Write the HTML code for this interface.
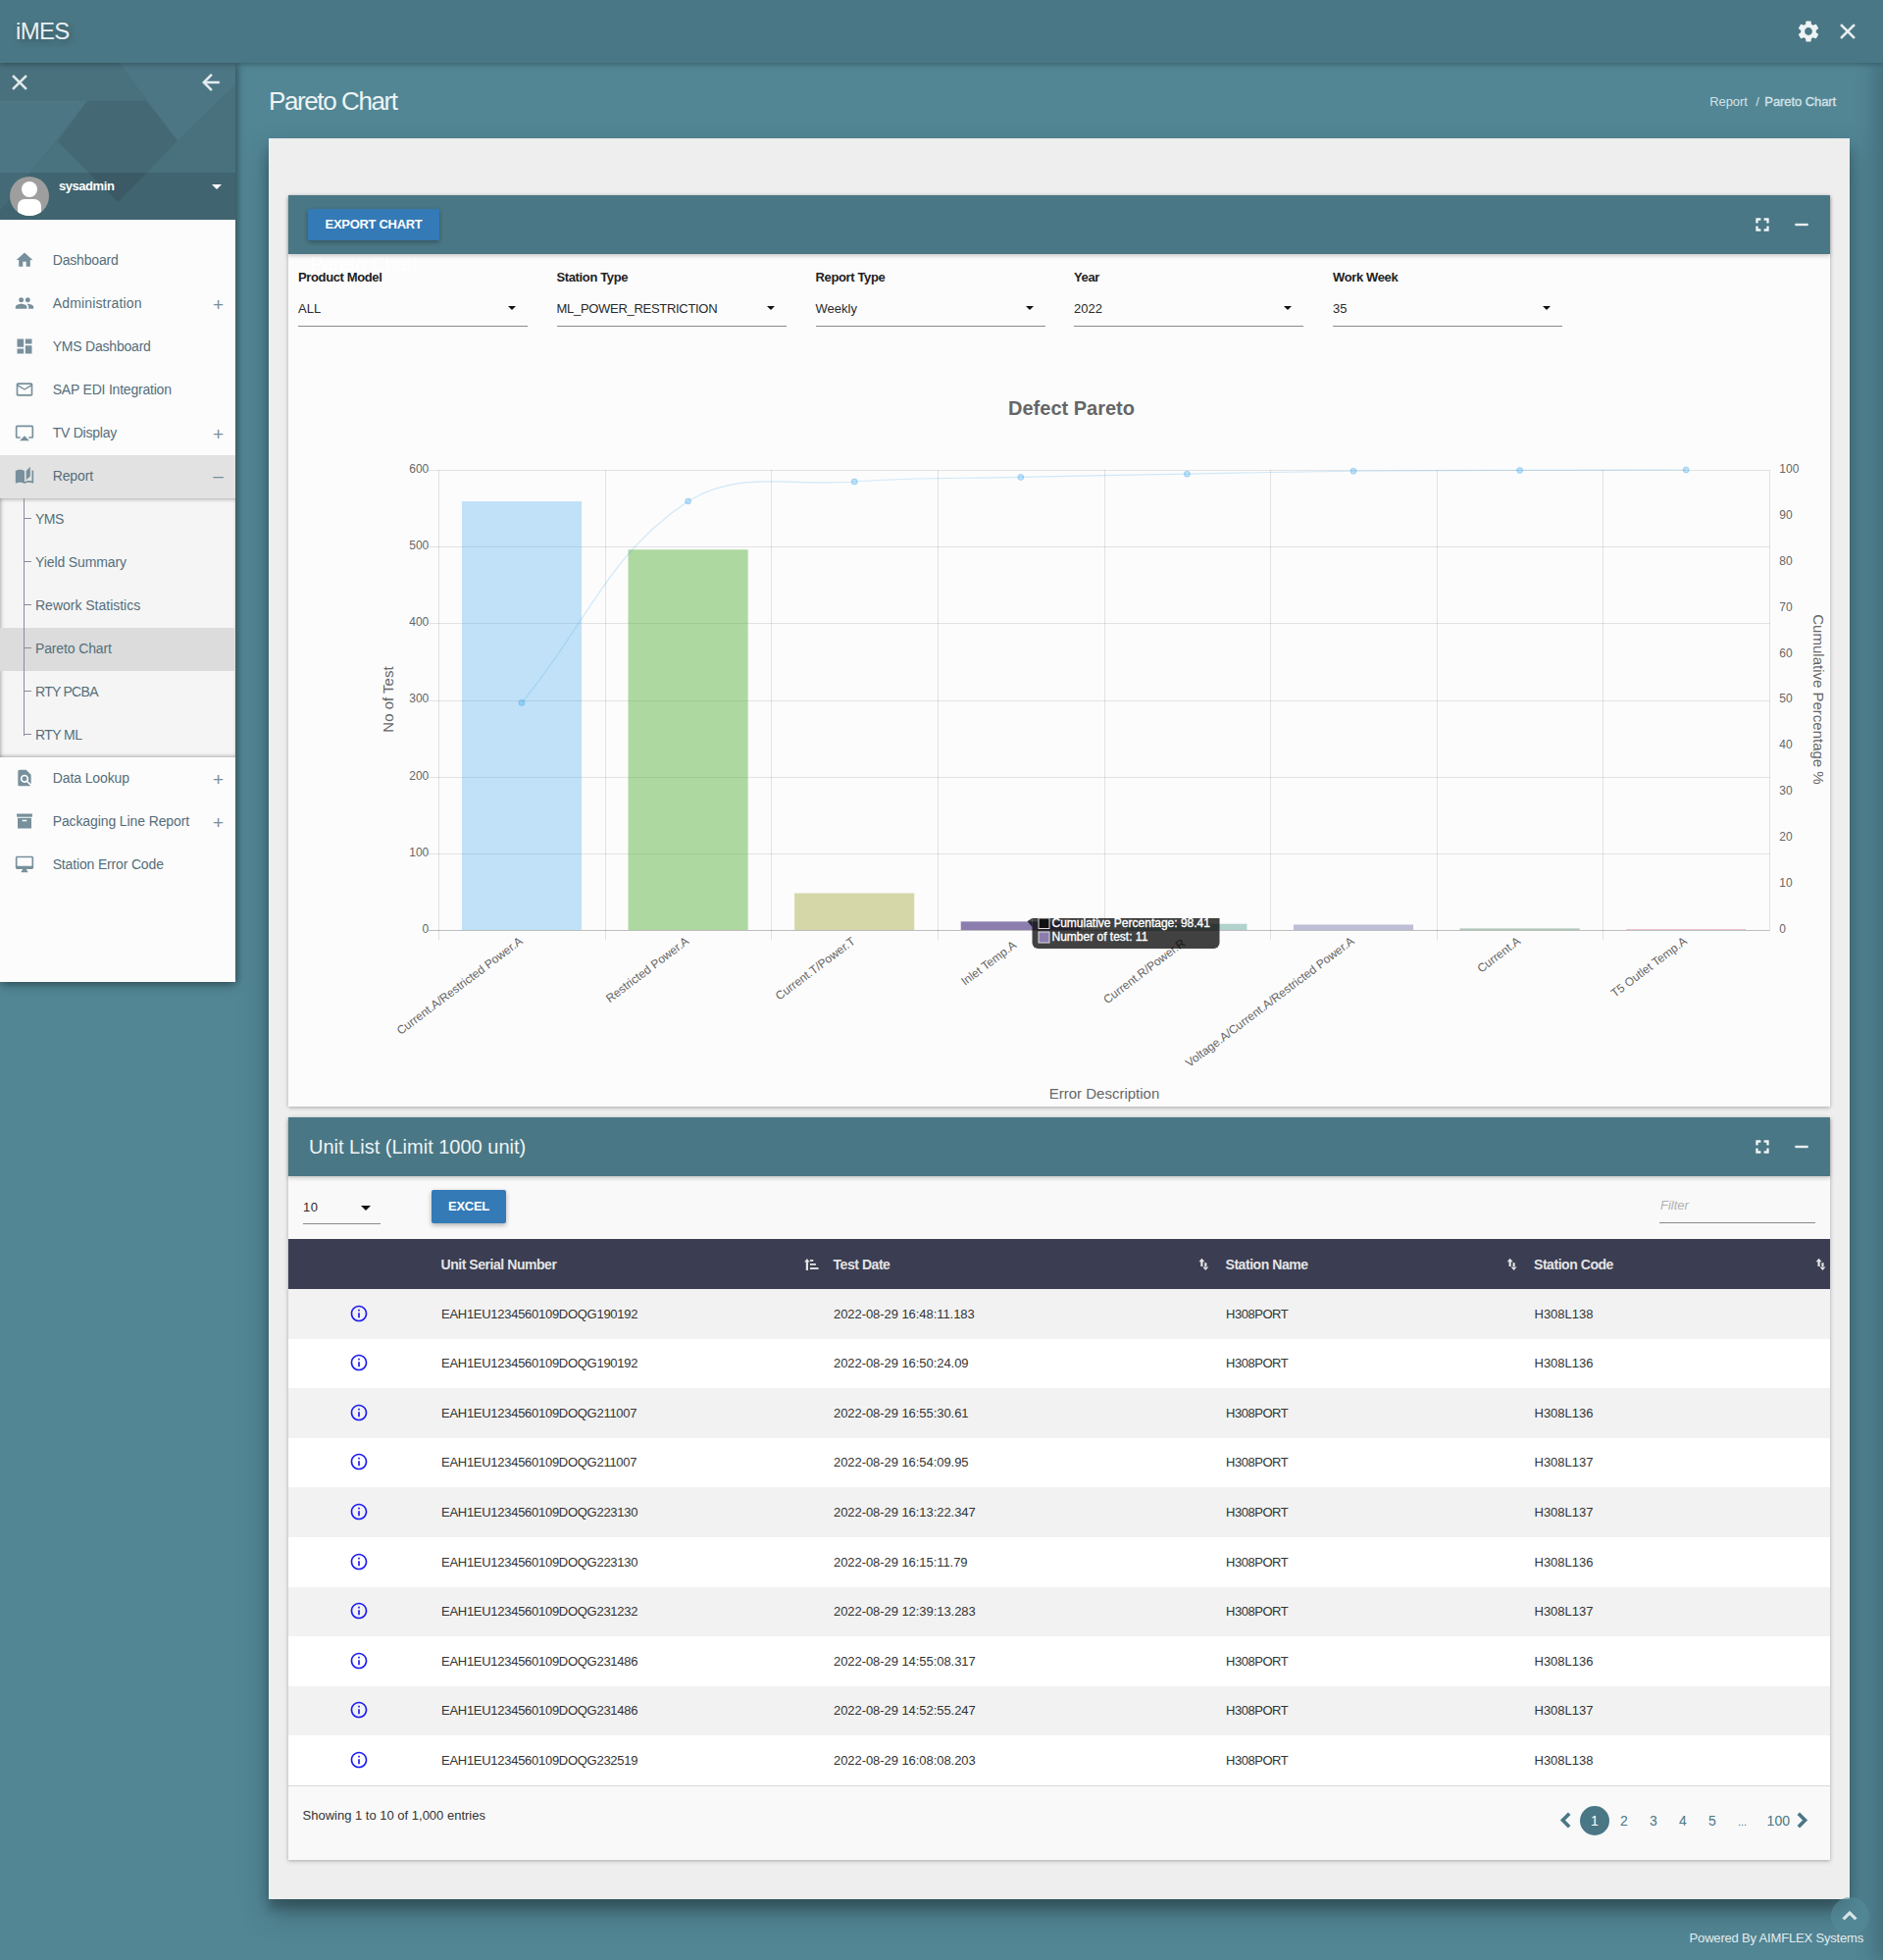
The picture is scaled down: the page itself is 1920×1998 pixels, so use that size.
<!DOCTYPE html>
<html lang="en">
<head>
<meta charset="utf-8">
<title>iMES - Pareto Chart</title>
<style>
*{box-sizing:border-box;margin:0;padding:0}
html,body{width:1920px;height:1998px;overflow:hidden}
body{font-family:"Liberation Sans",sans-serif;font-size:14px;color:#333;position:relative;
  background:#528695;}
.abs{position:absolute}
svg{display:block}
/* top bar */
#topbar{position:absolute;left:0;top:0;width:1920px;height:64px;background:#4a7785;box-shadow:0 2px 5px rgba(0,0,0,.26);z-index:20}
#brand{position:absolute;left:16px;top:17px;font-size:24px;line-height:30px;color:#e9eff1;text-shadow:2px 3px 7px rgba(0,0,0,.32);letter-spacing:-.7px}
/* sidebar */
#sidebar{position:absolute;left:0;top:64px;width:240px;height:937px;background:#fcfcfc;box-shadow:0 3px 10px rgba(0,0,0,.35),2px 0 6px rgba(0,0,0,.2);z-index:10}
#sbhead{position:absolute;left:0;top:0;width:240px;height:160px;background:#48707d;overflow:hidden}
#userrow{position:absolute;left:0;top:112px;width:240px;height:48px;background:rgba(0,0,0,.1)}
#uname{position:absolute;left:60px;top:6px;font-size:13px;font-weight:bold;color:#fff;line-height:16px;letter-spacing:-.45px}
.mi{position:absolute;left:0;width:240px;height:44px;color:#546e7a;font-size:14px;line-height:44px}
.mi .ic{position:absolute;left:15px;top:12px;width:20px;height:20px;fill:#78909c}
.mi .tx{position:absolute;left:53.7px;top:0;white-space:nowrap}
.mi .pl{position:absolute;left:215.5px;top:1.5px;width:14px;text-align:center;font-size:19px;color:#78909c}
.sub{position:absolute;left:0;width:240px;height:44px;color:#546e7a;font-size:14px;line-height:44px}
.sub .tx{position:absolute;left:36px;top:0;white-space:nowrap}
.sub .tk{position:absolute;left:25px;top:21px;width:7px;height:1px;background:#8a8aa0}
/* page */
#ptitle{position:absolute;left:274px;top:85px;font-size:26px;line-height:36px;color:#eef4f5;letter-spacing:-1.4px;white-space:nowrap}
#crumb span{position:absolute;top:94px;font-size:13px;line-height:20px;color:#d5e2e6;white-space:nowrap}
#content{position:absolute;left:274px;top:141px;width:1612px;height:1795px;background:#eeeeee;box-shadow:0 14px 28px rgba(0,0,0,.25),0 10px 10px rgba(0,0,0,.22)}
.card{position:absolute;left:20px;width:1572px;background:#fcfcfc;box-shadow:0 1px 4px rgba(0,0,0,.3)}
.chead{position:absolute;left:0;top:0;width:1572px;height:60px;background:#4a7785;box-shadow:0 2px 4px rgba(0,0,0,.2)}
.btn{position:absolute;background:#337ab7;color:#fff;font-weight:bold;font-size:13px;letter-spacing:-.3px;text-align:center;border-radius:2px;box-shadow:0 2px 5px rgba(0,0,0,.3);white-space:nowrap}

.flab{position:absolute;top:75.7px;font-size:13px;font-weight:bold;color:#222;line-height:16px;white-space:nowrap;letter-spacing:-.37px}
.fsel{position:absolute;top:99px;width:234px;height:35px;border-bottom:1px solid #8a8a8a}
.fsel span{position:absolute;left:0;top:9px;font-size:13px;line-height:16px;color:#2a2a2a;white-space:nowrap}
.fsel i{position:absolute;right:11.7px;top:14.3px;width:0;height:0;border-left:4.5px solid transparent;border-right:4.5px solid transparent;border-top:4.5px solid #111}
.hic{position:absolute;top:18.5px;width:22px;height:22px;fill:#f4f7f8;stroke:#f4f7f8;stroke-width:.5}
#c2title{position:absolute;left:21px;top:16px;font-size:20px;line-height:28px;color:#eef3f5;white-space:nowrap}
/*tablecss*/
.th{position:absolute;top:140px;font-size:14px;font-weight:bold;line-height:20px;color:#e4e4e4;white-space:nowrap;letter-spacing:-.45px}
.tr{position:absolute;left:0;width:1572px;height:50.6px}
.tr span{position:absolute;top:17.7px;font-size:13px;line-height:16px;color:#333;white-space:nowrap}
.pg{position:absolute;top:706.5px;width:40px;text-align:center;font-size:14px;line-height:20px}
/*/tablecss*/
</style>
</head>
<body>
<!-- TOPBAR -->
<div id="topbar">
  <div id="brand">iMES</div>
  <svg class="abs" style="left:1831px;top:19px" width="26" height="26" viewBox="0 0 24 24" fill="#eef3f5"><path d="M19.14 12.94c.04-.3.06-.61.06-.94 0-.32-.02-.64-.07-.94l2.03-1.58c.18-.14.23-.41.12-.61l-1.92-3.32c-.12-.22-.37-.29-.59-.22l-2.39.96c-.5-.38-1.03-.7-1.62-.94l-.36-2.54c-.04-.24-.24-.41-.48-.41h-3.84c-.24 0-.43.17-.47.41l-.36 2.54c-.59.24-1.13.57-1.62.94l-2.39-.96c-.22-.08-.47 0-.59.22L2.74 8.87c-.12.21-.08.47.12.61l2.03 1.58c-.05.3-.09.63-.09.94s.02.64.07.94l-2.03 1.58c-.18.14-.23.41-.12.61l1.92 3.32c.12.22.37.29.59.22l2.39-.96c.5.38 1.03.7 1.62.94l.36 2.54c.05.24.24.41.48.41h3.84c.24 0 .44-.17.47-.41l.36-2.54c.59-.24 1.13-.56 1.62-.94l2.39.96c.22.08.47 0 .59-.22l1.92-3.32c.12-.22.07-.47-.12-.61l-2.01-1.58zM12 15.6c-1.98 0-3.6-1.62-3.6-3.6s1.62-3.6 3.6-3.6 3.6 1.62 3.6 3.6-1.62 3.6-3.6 3.6z"/></svg>
  <svg class="abs" style="left:1871px;top:19px" width="26" height="26" viewBox="0 0 24 24" fill="#eef3f5" stroke="#eef3f5" stroke-width=".4"><path d="M19 6.41L17.59 5 12 10.59 6.41 5 5 6.41 10.59 12 5 17.59 6.41 19 12 13.41 17.59 19 19 17.59 13.41 12z"/></svg>
</div>

<!-- SIDEBAR -->
<div id="sidebar">
  <div id="sbhead">
    <svg class="abs" style="left:0;top:0" width="240" height="160" viewBox="0 0 240 160">
      <polygon points="121.5,0 240,0 240,22 181,79" fill="#4d7685"/>
      <polygon points="0,38.8 89,38.8 0,151" fill="#4d7685"/>
      <polygon points="89,38.8 149,38.8 181,79.2 150,112 90,112 58.7,80.6" fill="#446975"/>
      <polygon points="58.7,80.6 90,112 31.8,112" fill="#4a7380"/>
      <polygon points="90,112 150,112 120,142" fill="#426571"/>
    </svg>
    <svg class="abs" style="left:7px;top:7px" width="26" height="26" viewBox="0 0 24 24" fill="#e6eef0" stroke="#e6eef0" stroke-width=".4"><path d="M19 6.41L17.59 5 12 10.59 6.41 5 5 6.41 10.59 12 5 17.59 6.41 19 12 13.41 17.59 19 19 17.59 13.41 12z"/></svg>
    <svg class="abs" style="left:202px;top:7px" width="26" height="26" viewBox="0 0 24 24" fill="#e6eef0" stroke="#e6eef0" stroke-width=".4"><path d="M20 11H7.83l5.59-5.59L12 4l-8 8 8 8 1.41-1.41L7.83 13H20v-2z"/></svg>
    <div id="userrow">
      <div class="abs" style="left:10px;top:4px;width:40px;height:40px;border-radius:50%;background:#9e9e9e;overflow:hidden"><div class="abs" style="left:12px;top:5px;width:16px;height:16px;border-radius:50%;background:#fff"></div><div class="abs" style="left:8px;top:23px;width:24px;height:24px;border-radius:7px;background:#fff"></div></div>
      <div id="uname">sysadmin</div>
      <svg class="abs" style="left:209px;top:2px" width="24" height="24" viewBox="0 0 24 24" fill="#fff"><path d="M7 10l5 5 5-5z"/></svg>
    </div>
  </div>
  <div id="menu">
<div class="abs" style="left:0;top:443.5px;width:240px;height:264px;background:#f5f5f5;box-shadow:inset 0 3px 4px -2px rgba(0,0,0,.28),inset 0 -3px 4px -2px rgba(0,0,0,.28),inset 3px 0 4px -2px rgba(0,0,0,.2)"></div>
<div class="mi" style="top:179px"><svg class="ic" viewBox="0 0 24 24"><path fill-rule="evenodd" d="M10 20v-6h4v6h5v-8h3L12 3 2 12h3v8z"/></svg><span class="tx" style="letter-spacing:-0.17px">Dashboard</span></div>
<div class="mi" style="top:223px"><svg class="ic" viewBox="0 0 24 24"><path fill-rule="evenodd" d="M16 11c1.66 0 2.99-1.34 2.99-3S17.66 5 16 5c-1.66 0-3 1.34-3 3s1.34 3 3 3zm-8 0c1.66 0 2.99-1.34 2.99-3S9.66 5 8 5C6.34 5 5 6.34 5 8s1.34 3 3 3zm0 2c-2.33 0-7 1.17-7 3.5V19h14v-2.5c0-2.33-4.67-3.5-7-3.5zm8 0c-.29 0-.62.02-.97.05 1.16.84 1.97 1.97 1.97 3.45V19h6v-2.5c0-2.33-4.67-3.5-7-3.5z"/></svg><span class="tx" style="letter-spacing:0.16px">Administration</span><span class="pl">+</span></div>
<div class="mi" style="top:267px"><svg class="ic" viewBox="0 0 24 24"><path fill-rule="evenodd" d="M3 13h8V3H3v10zm0 8h8v-6H3v6zm10 0h8V11h-8v10zm0-18v6h8V3h-8z"/></svg><span class="tx" style="letter-spacing:-0.21px">YMS Dashboard</span></div>
<div class="mi" style="top:311px"><svg class="ic" viewBox="0 0 24 24"><path fill-rule="evenodd" d="M20 4H4c-1.1 0-1.99.9-1.99 2L2 18c0 1.1.9 2 2 2h16c1.1 0 2-.9 2-2V6c0-1.1-.9-2-2-2zm0 14H4V8l8 5 8-5v10zm-8-7L4 6h16l-8 5z"/></svg><span class="tx" style="letter-spacing:-0.21px">SAP EDI Integration</span></div>
<div class="mi" style="top:355px"><svg class="ic" viewBox="0 0 24 24"><path fill-rule="evenodd" d="M6 22h12l-6-6zM21 3H3c-1.1 0-2 .9-2 2v12c0 1.1.9 2 2 2h4v-2H3V5h18v12h-4v2h4c1.1 0 2-.9 2-2V5c0-1.1-.9-2-2-2z"/></svg><span class="tx" style="letter-spacing:-0.24px">TV Display</span><span class="pl">+</span></div>
<div class="abs" style="left:0;top:400.2px;width:240px;height:44px;background:#e2e2e2"></div>
<div class="mi" style="top:399px"><svg class="ic" viewBox="0 0 24 24"><path fill-rule="evenodd" d="M19 1l-5 5v11l5-4.5V1zM1 6v14.65c0 .25.25.5.5.5.1 0 .15-.05.25-.05C3.1 20.45 5.05 20 6.5 20c1.95 0 4.05.4 5.5 1.5V6c-1.45-1.1-3.55-1.5-5.5-1.5S2.45 4.9 1 6zm22 13.5V6c-.6-.45-1.25-.75-2-1v13.5c-1.1-.35-2.3-.5-3.5-.5-1.7 0-4.15.65-5.5 1.5v2c1.35-.85 3.8-1.5 5.5-1.5 1.65 0 3.35.3 4.75 1.05.1.05.15.05.25.05.25 0 .5-.25.5-.5v-1.1z"/></svg><span class="tx" style="letter-spacing:-0.12px">Report</span><span class="pl" style="top:0">–</span></div>
<div class="sub" style="top:443px"><span class="tk"></span><span class="tx" style="letter-spacing:-0.5px">YMS</span></div>
<div class="sub" style="top:487px"><span class="tk"></span><span class="tx" style="letter-spacing:-0.11px">Yield Summary</span></div>
<div class="sub" style="top:531px"><span class="tk"></span><span class="tx" style="letter-spacing:-0.01px">Rework Statistics</span></div>
<div class="abs" style="left:0;top:575.8px;width:240px;height:44px;background:#dcdcdc"></div>
<div class="sub" style="top:575px"><span class="tk"></span><span class="tx" style="letter-spacing:-0.14px">Pareto Chart</span></div>
<div class="sub" style="top:619px"><span class="tk"></span><span class="tx" style="letter-spacing:-0.72px">RTY PCBA</span></div>
<div class="sub" style="top:663px"><span class="tk"></span><span class="tx" style="letter-spacing:-0.57px">RTY ML</span></div>
<div class="mi" style="top:707px"><svg class="ic" viewBox="0 0 24 24"><path fill-rule="evenodd" d="M20 19.59V8l-6-6H6c-1.1 0-1.99.9-1.99 2L4 20c0 1.1.89 2 1.99 2H18c.45 0 .85-.15 1.19-.4l-4.43-4.43c-.8.52-1.74.83-2.76.83-2.76 0-5-2.24-5-5s2.24-5 5-5 5 2.24 5 5c0 1.02-.31 1.96-.83 2.75L20 19.59zM9 13c0 1.66 1.34 3 3 3s3-1.34 3-3-1.34-3-3-3-3 1.34-3 3z"/></svg><span class="tx" style="letter-spacing:-0.1px">Data Lookup</span><span class="pl">+</span></div>
<div class="mi" style="top:751px"><svg class="ic" viewBox="0 0 24 24"><path fill-rule="evenodd" d="M2.5 3h19v4h-19zM3.6 8.2h16.8V21H3.6zM9.2 10.4h5.6v2H9.2z"/></svg><span class="tx" style="letter-spacing:-0.11px">Packaging Line Report</span><span class="pl">+</span></div>
<div class="mi" style="top:795px"><svg class="ic" viewBox="0 0 24 24"><path fill-rule="evenodd" d="M21 2H3c-1.1 0-2 .9-2 2v12c0 1.1.9 2 2 2h7l-2 3v1h8v-1l-2-3h7c1.1 0 2-.9 2-2V4c0-1.1-.9-2-2-2zm0 12H3V4h18v10z"/></svg><span class="tx" style="letter-spacing:-0.16px">Station Error Code</span></div>
<div class="abs" style="left:24px;top:443.5px;width:1px;height:242px;background:#8a8aa0"></div>
</div><!--/menu-->
</div>

<div id="rshadow" class="abs" style="left:1920px;top:64px;width:20px;height:1934px;box-shadow:-4px 0 22px 4px rgba(0,0,0,.2)"></div>
<!-- PAGE -->
<div id="ptitle">Pareto Chart</div>
<div id="crumb"><span style="left:1743.3px;letter-spacing:-.1px">Report</span><span style="left:1790.3px">/</span><span style="left:1799.3px;letter-spacing:-.07px;-webkit-text-stroke:.35px #d5e2e6">Pareto Chart</span></div>
<div id="content">
  <div class="card" id="card1" style="top:58px;height:929px">
<!--chart-->
<svg class="abs" style="left:0;top:0" width="1572" height="929" viewBox="294 199 1572 929" font-family="Liberation Sans, sans-serif">
<line x1="447.50" y1="479.0" x2="447.50" y2="958.5" stroke="rgba(0,0,0,.1)" stroke-width="1"/>
<line x1="617.50" y1="479.0" x2="617.50" y2="958.5" stroke="rgba(0,0,0,.1)" stroke-width="1"/>
<line x1="786.50" y1="479.0" x2="786.50" y2="958.5" stroke="rgba(0,0,0,.1)" stroke-width="1"/>
<line x1="956.50" y1="479.0" x2="956.50" y2="958.5" stroke="rgba(0,0,0,.1)" stroke-width="1"/>
<line x1="1126.50" y1="479.0" x2="1126.50" y2="958.5" stroke="rgba(0,0,0,.1)" stroke-width="1"/>
<line x1="1295.50" y1="479.0" x2="1295.50" y2="958.5" stroke="rgba(0,0,0,.1)" stroke-width="1"/>
<line x1="1465.50" y1="479.0" x2="1465.50" y2="958.5" stroke="rgba(0,0,0,.1)" stroke-width="1"/>
<line x1="1634.50" y1="479.0" x2="1634.50" y2="958.5" stroke="rgba(0,0,0,.1)" stroke-width="1"/>
<line x1="1804.50" y1="479.0" x2="1804.50" y2="948.5" stroke="rgba(0,0,0,.1)" stroke-width="1"/>
<line x1="437.2" y1="948.50" x2="1804.5" y2="948.50" stroke="rgba(0,0,0,.25)" stroke-width="1"/>
<text x="437.3" y="947.80" font-size="12" fill="#666" text-anchor="end" dominant-baseline="middle">0</text>
<line x1="437.2" y1="870.50" x2="1804.5" y2="870.50" stroke="rgba(0,0,0,.1)" stroke-width="1"/>
<text x="437.3" y="869.63" font-size="12" fill="#666" text-anchor="end" dominant-baseline="middle">100</text>
<line x1="437.2" y1="792.50" x2="1804.5" y2="792.50" stroke="rgba(0,0,0,.1)" stroke-width="1"/>
<text x="437.3" y="791.47" font-size="12" fill="#666" text-anchor="end" dominant-baseline="middle">200</text>
<line x1="437.2" y1="714.50" x2="1804.5" y2="714.50" stroke="rgba(0,0,0,.1)" stroke-width="1"/>
<text x="437.3" y="713.30" font-size="12" fill="#666" text-anchor="end" dominant-baseline="middle">300</text>
<line x1="437.2" y1="635.50" x2="1804.5" y2="635.50" stroke="rgba(0,0,0,.1)" stroke-width="1"/>
<text x="437.3" y="635.13" font-size="12" fill="#666" text-anchor="end" dominant-baseline="middle">400</text>
<line x1="437.2" y1="557.50" x2="1804.5" y2="557.50" stroke="rgba(0,0,0,.1)" stroke-width="1"/>
<text x="437.3" y="556.97" font-size="12" fill="#666" text-anchor="end" dominant-baseline="middle">500</text>
<line x1="437.2" y1="479.50" x2="1804.5" y2="479.50" stroke="rgba(0,0,0,.1)" stroke-width="1"/>
<text x="437.3" y="478.80" font-size="12" fill="#666" text-anchor="end" dominant-baseline="middle">600</text>
<text x="1814.3" y="947.80" font-size="12" fill="#666" dominant-baseline="middle">0</text>
<text x="1814.3" y="900.90" font-size="12" fill="#666" dominant-baseline="middle">10</text>
<text x="1814.3" y="854.00" font-size="12" fill="#666" dominant-baseline="middle">20</text>
<text x="1814.3" y="807.10" font-size="12" fill="#666" dominant-baseline="middle">30</text>
<text x="1814.3" y="760.20" font-size="12" fill="#666" dominant-baseline="middle">40</text>
<text x="1814.3" y="713.30" font-size="12" fill="#666" dominant-baseline="middle">50</text>
<text x="1814.3" y="666.40" font-size="12" fill="#666" dominant-baseline="middle">60</text>
<text x="1814.3" y="619.50" font-size="12" fill="#666" dominant-baseline="middle">70</text>
<text x="1814.3" y="572.60" font-size="12" fill="#666" dominant-baseline="middle">80</text>
<text x="1814.3" y="525.70" font-size="12" fill="#666" dominant-baseline="middle">90</text>
<text x="1814.3" y="478.80" font-size="12" fill="#666" dominant-baseline="middle">100</text>
<rect x="470.94" y="511.05" width="122.11" height="436.95" fill="rgba(54,162,235,.3)"/>
<rect x="640.54" y="560.29" width="122.11" height="387.71" fill="rgba(94,180,68,.5)"/>
<rect x="810.14" y="910.48" width="122.11" height="37.52" fill="rgba(176,178,84,.5)"/>
<rect x="979.74" y="939.40" width="122.11" height="8.60" fill="rgba(92,71,142,.7)"/>
<rect x="1149.34" y="941.75" width="122.11" height="6.25" fill="rgba(67,147,134,.4)"/>
<rect x="1318.94" y="942.53" width="122.11" height="5.47" fill="rgba(97,97,160,.4)"/>
<rect x="1488.54" y="946.44" width="122.11" height="1.56" fill="rgba(98,148,118,.5)"/>
<rect x="1658.14" y="947.22" width="122.11" height="0.78" fill="rgba(212,108,158,.5)"/>
<path d="M532.00 716.40 C599.84 634.20 618.91 565.84 701.60 510.90 C754.59 479.00 803.14 495.92 871.20 491.02 C938.82 486.14 972.95 488.03 1040.80 486.46 C1108.63 484.88 1142.56 484.39 1210.40 483.14 C1278.24 481.90 1312.16 480.99 1380.00 480.24 C1447.84 479.50 1481.76 479.66 1549.60 479.41 C1617.44 479.17 1651.36 479.17 1719.20 479.00" fill="none" stroke="rgba(54,162,235,.22)" stroke-width="1.2"/>
<circle cx="532.00" cy="716.40" r="3" fill="rgba(54,162,235,.3)" stroke="rgba(54,162,235,.35)" stroke-width="1"/>
<circle cx="701.60" cy="510.90" r="3" fill="rgba(54,162,235,.3)" stroke="rgba(54,162,235,.35)" stroke-width="1"/>
<circle cx="871.20" cy="491.02" r="3" fill="rgba(54,162,235,.3)" stroke="rgba(54,162,235,.35)" stroke-width="1"/>
<circle cx="1040.80" cy="486.46" r="3" fill="rgba(54,162,235,.3)" stroke="rgba(54,162,235,.35)" stroke-width="1"/>
<circle cx="1210.40" cy="483.14" r="3" fill="rgba(54,162,235,.3)" stroke="rgba(54,162,235,.35)" stroke-width="1"/>
<circle cx="1380.00" cy="480.24" r="3" fill="rgba(54,162,235,.3)" stroke="rgba(54,162,235,.35)" stroke-width="1"/>
<circle cx="1549.60" cy="479.41" r="3" fill="rgba(54,162,235,.3)" stroke="rgba(54,162,235,.35)" stroke-width="1"/>
<circle cx="1719.20" cy="479.00" r="3" fill="rgba(54,162,235,.3)" stroke="rgba(54,162,235,.35)" stroke-width="1"/>
<text transform="translate(531.70 958.5) rotate(-37)" font-size="12" fill="#666" text-anchor="end" dominant-baseline="middle">Current.A/Restricted Power.A</text>
<text transform="translate(701.30 958.5) rotate(-37)" font-size="12" fill="#666" text-anchor="end" dominant-baseline="middle">Restricted Power.A</text>
<text transform="translate(870.90 958.5) rotate(-37)" font-size="12" fill="#666" text-anchor="end" dominant-baseline="middle">Current.T/Power.T</text>
<text transform="translate(1035.15 962.5) rotate(-37)" font-size="12" fill="#666" text-anchor="end" dominant-baseline="middle">Inlet Temp.A</text>
<text transform="translate(1207.46 960.5) rotate(-37)" font-size="12" fill="#666" text-anchor="end" dominant-baseline="middle">Current.R/Power.R</text>
<text transform="translate(1379.70 958.5) rotate(-37)" font-size="12" fill="#666" text-anchor="end" dominant-baseline="middle">Voltage.A/Current.A/Restricted Power.A</text>
<text transform="translate(1549.30 958.5) rotate(-37)" font-size="12" fill="#666" text-anchor="end" dominant-baseline="middle">Current.A</text>
<text transform="translate(1718.90 958.5) rotate(-37)" font-size="12" fill="#666" text-anchor="end" dominant-baseline="middle">T5 Outlet Temp.A</text>
<text transform="translate(397 713) rotate(-90)" font-size="15" fill="#666" text-anchor="middle" dominant-baseline="middle">No of Test</text>
<text transform="translate(1853 713) rotate(90)" font-size="15" fill="#666" text-anchor="middle" dominant-baseline="middle">Cumulative Percentage %</text>
<text x="1126" y="1115.7" font-size="15" fill="#666" text-anchor="middle" dominant-baseline="middle">Error Description</text>
<text x="1092.5" y="417.5" font-size="20" font-weight="bold" fill="#666" text-anchor="middle" dominant-baseline="middle">Defect Pareto</text>
<g>
<path d="M1052.5 936 H1243.5 V961 a6 6 0 0 1 -6 6 H1058.5 a6 6 0 0 1 -6 -6 Z" fill="rgba(0,0,0,.74)"/>
<path d="M1052.5 936 L1047.5 939 L1052.5 945 Z" fill="rgba(0,0,0,.74)"/>
<rect x="1059" y="936" width="11" height="10.5" fill="#111" stroke="#ddd" stroke-width="1"/>
<rect x="1059" y="950" width="11" height="11" fill="rgb(140,125,175)" stroke="#ddd" stroke-width="1"/>
<g font-size="12" fill="#fff" stroke="#fff" stroke-width=".35"><text x="1072.5" y="941.5" dominant-baseline="middle">Cumulative Percentage: 98.41</text><text x="1072.5" y="955.5" dominant-baseline="middle">Number of test: 11</text></g>
</g>
</svg>
<!--/chart-->
<div id="ghost" class="abs" style="left:22px;top:58px;font-size:20px;line-height:24px;color:#fff;letter-spacing:-.3px;white-space:nowrap">Pareto Chart</div>
<!--filters-->
<div class="flab" style="left:10px">Product Model</div><div class="fsel" style="left:10px"><span>ALL</span><i></i></div>
<div class="flab" style="left:273.5px">Station Type</div><div class="fsel" style="left:273.5px"><span style="letter-spacing:-.3px">ML_POWER_RESTRICTION</span><i></i></div>
<div class="flab" style="left:537.5px">Report Type</div><div class="fsel" style="left:537.5px"><span>Weekly</span><i></i></div>
<div class="flab" style="left:801px">Year</div><div class="fsel" style="left:801px"><span>2022</span><i></i></div>
<div class="flab" style="left:1065px">Work Week</div><div class="fsel" style="left:1065px"><span>35</span><i></i></div>
<!--/filters-->
    <div class="chead">
      <div class="btn" style="left:20px;top:13.8px;width:134px;height:32.3px;line-height:32.3px">EXPORT CHART</div>
      <svg class="hic" style="left:1491.5px" viewBox="0 0 24 24"><path d="M7 14H5v5h5v-2H7v-3zm-2-4h2V7h3V5H5v5zm12 7h-3v2h5v-5h-2v3zM14 5v2h3v3h2V5h-5z"/></svg><svg class="hic" style="left:1531.5px" viewBox="0 0 24 24"><path d="M19 13H5v-2h14v2z"/></svg>
    </div>
  </div>
  <div class="card" id="card2" style="top:998px;height:757px">
<!--table-->
<div class="abs" style="left:0;top:60px;width:1572px;height:64px;background:#f9f9f9"></div>
<div class="abs" style="left:15px;top:81.5px;width:79px;height:27px;border-bottom:1px solid #8a8a8a"><span class="abs" style="left:0;top:2px;font-size:13px;line-height:16px;color:#2a2a2a;letter-spacing:.6px">10</span><i class="abs" style="left:59px;top:8px;width:0;height:0;border-left:5px solid transparent;border-right:5px solid transparent;border-top:5px solid #111"></i></div>
<div class="btn" style="left:146px;top:74px;width:76px;height:34px;line-height:34px">EXCEL</div>
<div class="abs" style="left:1398px;top:81px;width:159px;height:27px;border-bottom:1px solid #8a8a8a"><span class="abs" style="left:1px;top:1px;font-size:13px;line-height:16px;color:#b0b0b0;font-style:italic">Filter</span></div>
<div class="abs" style="left:0;top:124px;width:1572px;height:51px;background:#3b3d52"></div>
<div class="th" style="left:155.5px">Unit Serial Number</div>
<div class="th" style="left:555.5px">Test Date</div>
<div class="th" style="left:955.5px">Station Name</div>
<div class="th" style="left:1270px">Station Code</div>
<svg class="abs" style="left:0;top:124px" width="1572" height="51" viewBox="0 124 1572 51" fill="#e4e4e4"><path d="M526.10 147.40 L528.90 144.00 L531.70 147.40 Z M527.80 146.90 H530.00 V155.90 H527.80 Z"/><rect x="531.9" y="145" width="3.4" height="1.8"/><rect x="531.9" y="149" width="6" height="1.8"/><rect x="531.9" y="153.1" width="8.7" height="1.9"/></svg>
<svg class="abs" style="left:0;top:124px" width="1572" height="51" viewBox="0 124 1572 51" fill="#e4e4e4"><path d="M928.40 147.30 L931.40 143.70 L934.40 147.30 Z M930.30 146.80 H932.50 V152.00 H930.30 Z"/><path d="M932.30 152.40 L935.30 156.00 L938.30 152.40 Z M934.20 148.20 H936.40 V152.90 H934.20 Z"/></svg>
<svg class="abs" style="left:0;top:124px" width="1572" height="51" viewBox="0 124 1572 51" fill="#e4e4e4"><path d="M1242.70 147.30 L1245.70 143.70 L1248.70 147.30 Z M1244.60 146.80 H1246.80 V152.00 H1244.60 Z"/><path d="M1246.60 152.40 L1249.60 156.00 L1252.60 152.40 Z M1248.50 148.20 H1250.70 V152.90 H1248.50 Z"/></svg>
<svg class="abs" style="left:0;top:124px" width="1572" height="51" viewBox="0 124 1572 51" fill="#e4e4e4"><path d="M1557.60 147.30 L1560.60 143.70 L1563.60 147.30 Z M1559.50 146.80 H1561.70 V152.00 H1559.50 Z"/><path d="M1561.50 152.40 L1564.50 156.00 L1567.50 152.40 Z M1563.40 148.20 H1565.60 V152.90 H1563.40 Z"/></svg>
<div class="tr" style="top:175px;background:#f2f2f2"><svg class="abs" style="left:62px;top:14.7px" width="20" height="20" viewBox="0 0 24 24" fill="#1c1cf0"><path d="M11 7h2v2h-2zm0 4h2v6h-2zm1-9C6.48 2 2 6.48 2 12s4.48 10 10 10 10-4.48 10-10S17.52 2 12 2zm0 18c-4.41 0-8-3.59-8-8s3.59-8 8-8 8 3.59 8 8-3.59 8-8 8z"/></svg><span style="left:156px;letter-spacing:-.28px">EAH1EU1234560109DOQG190192</span><span style="left:556px;letter-spacing:-.06px">2022-08-29 16:48:11.183</span><span style="left:956px;letter-spacing:-.47px">H308PORT</span><span style="left:1270.5px">H308L138</span></div>
<div class="tr" style="top:225.6px;background:#ffffff"><svg class="abs" style="left:62px;top:14.7px" width="20" height="20" viewBox="0 0 24 24" fill="#1c1cf0"><path d="M11 7h2v2h-2zm0 4h2v6h-2zm1-9C6.48 2 2 6.48 2 12s4.48 10 10 10 10-4.48 10-10S17.52 2 12 2zm0 18c-4.41 0-8-3.59-8-8s3.59-8 8-8 8 3.59 8 8-3.59 8-8 8z"/></svg><span style="left:156px;letter-spacing:-.28px">EAH1EU1234560109DOQG190192</span><span style="left:556px;letter-spacing:-.06px">2022-08-29 16:50:24.09</span><span style="left:956px;letter-spacing:-.47px">H308PORT</span><span style="left:1270.5px">H308L136</span></div>
<div class="tr" style="top:276.2px;background:#f2f2f2"><svg class="abs" style="left:62px;top:14.7px" width="20" height="20" viewBox="0 0 24 24" fill="#1c1cf0"><path d="M11 7h2v2h-2zm0 4h2v6h-2zm1-9C6.48 2 2 6.48 2 12s4.48 10 10 10 10-4.48 10-10S17.52 2 12 2zm0 18c-4.41 0-8-3.59-8-8s3.59-8 8-8 8 3.59 8 8-3.59 8-8 8z"/></svg><span style="left:156px;letter-spacing:-.28px">EAH1EU1234560109DOQG211007</span><span style="left:556px;letter-spacing:-.06px">2022-08-29 16:55:30.61</span><span style="left:956px;letter-spacing:-.47px">H308PORT</span><span style="left:1270.5px">H308L136</span></div>
<div class="tr" style="top:326.8px;background:#ffffff"><svg class="abs" style="left:62px;top:14.7px" width="20" height="20" viewBox="0 0 24 24" fill="#1c1cf0"><path d="M11 7h2v2h-2zm0 4h2v6h-2zm1-9C6.48 2 2 6.48 2 12s4.48 10 10 10 10-4.48 10-10S17.52 2 12 2zm0 18c-4.41 0-8-3.59-8-8s3.59-8 8-8 8 3.59 8 8-3.59 8-8 8z"/></svg><span style="left:156px;letter-spacing:-.28px">EAH1EU1234560109DOQG211007</span><span style="left:556px;letter-spacing:-.06px">2022-08-29 16:54:09.95</span><span style="left:956px;letter-spacing:-.47px">H308PORT</span><span style="left:1270.5px">H308L137</span></div>
<div class="tr" style="top:377.40000000000003px;background:#f2f2f2"><svg class="abs" style="left:62px;top:14.7px" width="20" height="20" viewBox="0 0 24 24" fill="#1c1cf0"><path d="M11 7h2v2h-2zm0 4h2v6h-2zm1-9C6.48 2 2 6.48 2 12s4.48 10 10 10 10-4.48 10-10S17.52 2 12 2zm0 18c-4.41 0-8-3.59-8-8s3.59-8 8-8 8 3.59 8 8-3.59 8-8 8z"/></svg><span style="left:156px;letter-spacing:-.28px">EAH1EU1234560109DOQG223130</span><span style="left:556px;letter-spacing:-.06px">2022-08-29 16:13:22.347</span><span style="left:956px;letter-spacing:-.47px">H308PORT</span><span style="left:1270.5px">H308L137</span></div>
<div class="tr" style="top:428.00000000000006px;background:#ffffff"><svg class="abs" style="left:62px;top:14.7px" width="20" height="20" viewBox="0 0 24 24" fill="#1c1cf0"><path d="M11 7h2v2h-2zm0 4h2v6h-2zm1-9C6.48 2 2 6.48 2 12s4.48 10 10 10 10-4.48 10-10S17.52 2 12 2zm0 18c-4.41 0-8-3.59-8-8s3.59-8 8-8 8 3.59 8 8-3.59 8-8 8z"/></svg><span style="left:156px;letter-spacing:-.28px">EAH1EU1234560109DOQG223130</span><span style="left:556px;letter-spacing:-.06px">2022-08-29 16:15:11.79</span><span style="left:956px;letter-spacing:-.47px">H308PORT</span><span style="left:1270.5px">H308L136</span></div>
<div class="tr" style="top:478.6000000000001px;background:#f2f2f2"><svg class="abs" style="left:62px;top:14.7px" width="20" height="20" viewBox="0 0 24 24" fill="#1c1cf0"><path d="M11 7h2v2h-2zm0 4h2v6h-2zm1-9C6.48 2 2 6.48 2 12s4.48 10 10 10 10-4.48 10-10S17.52 2 12 2zm0 18c-4.41 0-8-3.59-8-8s3.59-8 8-8 8 3.59 8 8-3.59 8-8 8z"/></svg><span style="left:156px;letter-spacing:-.28px">EAH1EU1234560109DOQG231232</span><span style="left:556px;letter-spacing:-.06px">2022-08-29 12:39:13.283</span><span style="left:956px;letter-spacing:-.47px">H308PORT</span><span style="left:1270.5px">H308L137</span></div>
<div class="tr" style="top:529.2px;background:#ffffff"><svg class="abs" style="left:62px;top:14.7px" width="20" height="20" viewBox="0 0 24 24" fill="#1c1cf0"><path d="M11 7h2v2h-2zm0 4h2v6h-2zm1-9C6.48 2 2 6.48 2 12s4.48 10 10 10 10-4.48 10-10S17.52 2 12 2zm0 18c-4.41 0-8-3.59-8-8s3.59-8 8-8 8 3.59 8 8-3.59 8-8 8z"/></svg><span style="left:156px;letter-spacing:-.28px">EAH1EU1234560109DOQG231486</span><span style="left:556px;letter-spacing:-.06px">2022-08-29 14:55:08.317</span><span style="left:956px;letter-spacing:-.47px">H308PORT</span><span style="left:1270.5px">H308L136</span></div>
<div class="tr" style="top:579.8000000000001px;background:#f2f2f2"><svg class="abs" style="left:62px;top:14.7px" width="20" height="20" viewBox="0 0 24 24" fill="#1c1cf0"><path d="M11 7h2v2h-2zm0 4h2v6h-2zm1-9C6.48 2 2 6.48 2 12s4.48 10 10 10 10-4.48 10-10S17.52 2 12 2zm0 18c-4.41 0-8-3.59-8-8s3.59-8 8-8 8 3.59 8 8-3.59 8-8 8z"/></svg><span style="left:156px;letter-spacing:-.28px">EAH1EU1234560109DOQG231486</span><span style="left:556px;letter-spacing:-.06px">2022-08-29 14:52:55.247</span><span style="left:956px;letter-spacing:-.47px">H308PORT</span><span style="left:1270.5px">H308L137</span></div>
<div class="tr" style="top:630.4000000000001px;background:#ffffff"><svg class="abs" style="left:62px;top:14.7px" width="20" height="20" viewBox="0 0 24 24" fill="#1c1cf0"><path d="M11 7h2v2h-2zm0 4h2v6h-2zm1-9C6.48 2 2 6.48 2 12s4.48 10 10 10 10-4.48 10-10S17.52 2 12 2zm0 18c-4.41 0-8-3.59-8-8s3.59-8 8-8 8 3.59 8 8-3.59 8-8 8z"/></svg><span style="left:156px;letter-spacing:-.28px">EAH1EU1234560109DOQG232519</span><span style="left:556px;letter-spacing:-.06px">2022-08-29 16:08:08.203</span><span style="left:956px;letter-spacing:-.47px">H308PORT</span><span style="left:1270.5px">H308L138</span></div>
<div class="abs" style="left:0;top:680.5px;width:1572px;height:1px;background:#fff"></div><div class="abs" style="left:0;top:681px;width:1572px;height:1px;background:#d8d8d8"></div>
<div class="abs" style="left:0;top:682px;width:1572px;height:75px;background:#f9f9f9"></div>
<div class="abs" id="showing" style="left:14.5px;top:704.3px;font-size:13px;line-height:16px;color:#333;white-space:nowrap">Showing 1 to 10 of 1,000 entries</div>
<svg class="abs" style="left:1287.7px;top:702.0px" width="29" height="29" viewBox="0 0 24 24" fill="#4a7785" stroke="#4a7785" stroke-width=".9"><path d="M15.41 7.41L14 6l-6 6 6 6 1.41-1.41L10.83 12z"/></svg>
<svg class="abs" style="left:1528.8px;top:702.0px" width="29" height="29" viewBox="0 0 24 24" fill="#4a7785" stroke="#4a7785" stroke-width=".9"><path d="M10 6L8.59 7.41 13.17 12l-4.58 4.59L10 18l6-6z"/></svg>
<div class="abs" style="left:1317px;top:701.5px;width:30px;height:30px;border-radius:50%;background:#4a7785"></div>
<div class="pg" style="left:1312px;color:#fff">1</div>
<div class="pg" style="left:1342px;color:#4a7785">2</div>
<div class="pg" style="left:1372px;color:#4a7785">3</div>
<div class="pg" style="left:1402px;color:#4a7785">4</div>
<div class="pg" style="left:1432px;color:#4a7785">5</div>
<div class="pg" style="left:1462.5px;color:#4a7785;font-size:11px;top:708px">...</div>
<div class="pg" style="left:1499.3px;color:#4a7785">100</div>
<!--/table-->
    <div class="chead"><div id="c2title">Unit List (Limit 1000 unit)</div><svg class="hic" style="left:1491.5px" viewBox="0 0 24 24"><path d="M7 14H5v5h5v-2H7v-3zm-2-4h2V7h3V5H5v5zm12 7h-3v2h5v-5h-2v3zM14 5v2h3v3h2V5h-5z"/></svg><svg class="hic" style="left:1531.5px" viewBox="0 0 24 24"><path d="M19 13H5v-2h14v2z"/></svg></div>
  </div>
</div>
<div id="totop" class="abs" style="left:1866.5px;top:1934px;width:39px;height:39px;border-radius:50%;background:rgba(84,138,153,.62)"><svg class="abs" style="left:5.5px;top:5px" width="28" height="28" viewBox="0 0 24 24" fill="#dbe6e9" stroke="#dbe6e9" stroke-width=".8"><path d="M12 8l-6 6 1.41 1.41L12 10.83l4.59 4.59L18 14z"/></svg></div>
<div id="foot" class="abs" style="right:20px;top:1967px;font-size:13px;letter-spacing:-.18px;line-height:18px;color:#e3ecee;white-space:nowrap">Powered By AIMFLEX Systems</div>
</body>
</html>
